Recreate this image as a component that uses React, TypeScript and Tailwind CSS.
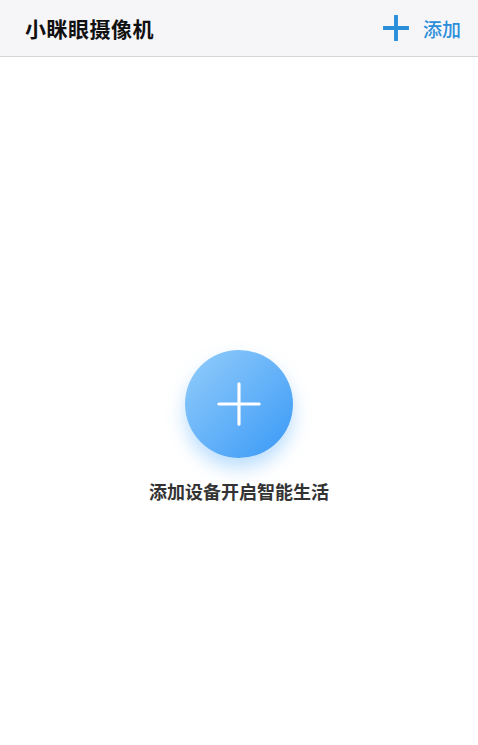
import React from 'react';

const font = { fontFamily: '"Noto Sans CJK SC", "Noto Sans", sans-serif' };

const PlusIcon: React.FC<{ className?: string; stroke?: number }> = ({ className, stroke = 2 }) => (
  <svg viewBox="0 0 24 24" className={className} fill="none" stroke="currentColor" strokeWidth={stroke} strokeLinecap="round">
    <path d="M12 1v22M1 12h22" />
  </svg>
);

const App: React.FC = () => {
  return (
    <div className="min-h-[745px] w-[478px] bg-white" style={font}>
      {/* Header */}
      <header className="flex h-[57px] items-center justify-between border-b border-[#d6d6da] bg-[#f6f6f9] pl-[25px] pr-[17px]">
        <h1 className="text-[21px] font-bold leading-none tracking-[0.5px] text-[#111]">小眯眼摄像机</h1>
        <button className="flex items-center gap-[14px] text-[#2b8ed9]">
          <PlusIcon className="h-[26px] w-[26px]" stroke={3.6} />
          <span className="text-[19px] font-medium leading-none">添加</span>
        </button>
      </header>

      {/* Empty state */}
      <main className="flex flex-col items-center pt-[293px]">
        <button className="flex h-[108px] w-[108px] items-center justify-center rounded-full bg-gradient-to-br from-[#92cdfa] to-[#3598f6] text-white shadow-[0_10px_18px_rgba(60,160,250,0.35)]">
          <PlusIcon className="h-[44px] w-[44px]" stroke={1.7} />
        </button>
        <p className="mt-[24px] text-[18px] font-semibold leading-none text-[#333]">添加设备开启智能生活</p>
      </main>
    </div>
  );
};

export default App;
